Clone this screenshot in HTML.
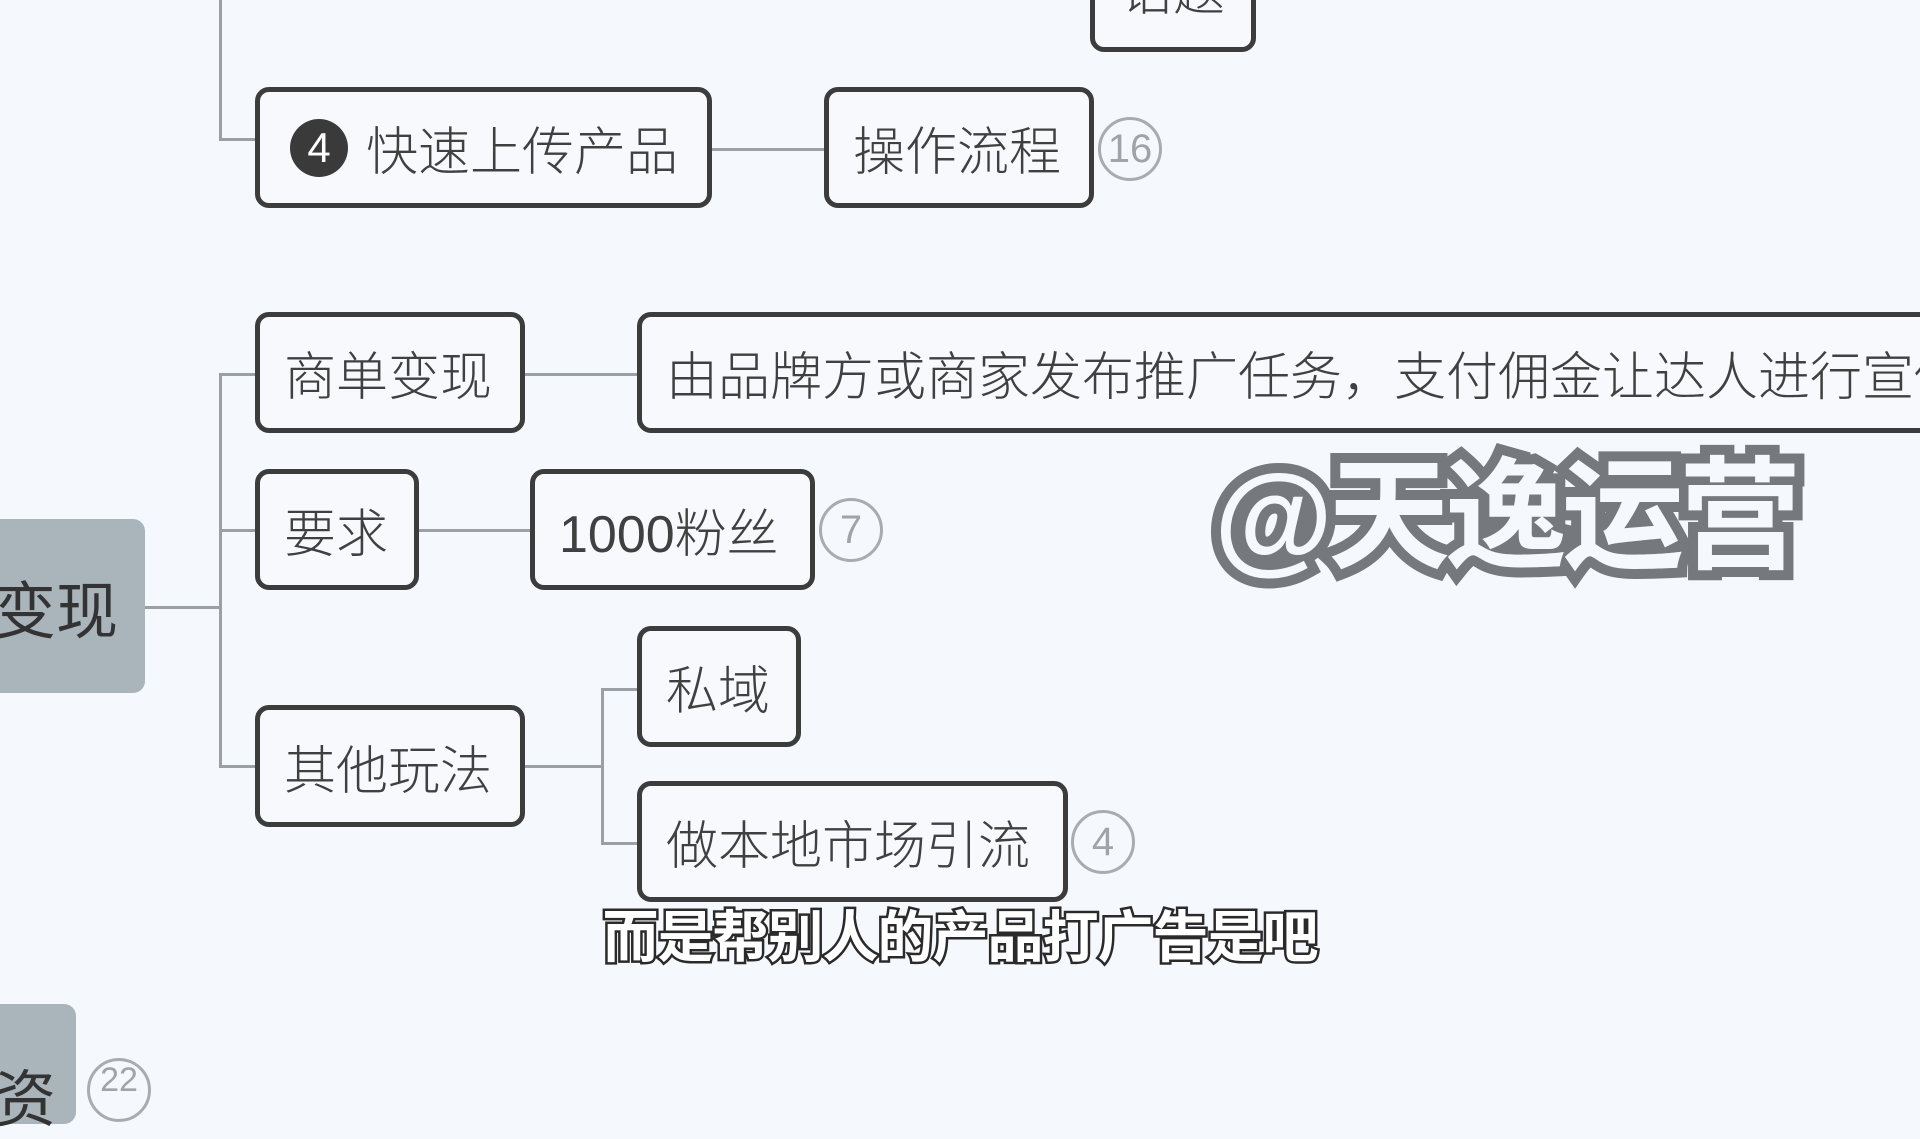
<!DOCTYPE html>
<html><head><meta charset="utf-8"><style>
html,body{margin:0;padding:0}
body{width:1920px;height:1080px;overflow:hidden;background:#f5f8fd;position:relative;font-family:"Liberation Sans","Noto Sans CJK SC",sans-serif}
.b{position:absolute;box-sizing:border-box;border:5px solid #3c3c3c;border-radius:14px;display:flex;align-items:center;padding-left:24px;font-size:52px;color:#404040;font-weight:300;white-space:nowrap;overflow:hidden;background:#f7f9fd}
.l{position:absolute;background:#9aa0a6}
.c{position:absolute;box-sizing:border-box;width:64px;height:64px;border:3px solid #a8acb0;border-radius:50%;color:#a0a4a8;font-size:40px;display:flex;align-items:center;justify-content:center}
.g{position:absolute;background:#aab4bb;border-radius:12px;color:#333;font-size:62px;display:flex;align-items:center}
</style></head><body>
<div class="l" style="left:219px;top:0;width:3px;height:140px"></div>
<div class="l" style="left:219px;top:138px;width:36px;height:3px"></div>
<div class="l" style="left:711px;top:148px;width:113px;height:3px"></div>
<div class="l" style="left:219px;top:373px;width:3px;height:394px"></div>
<div class="l" style="left:219px;top:373px;width:36px;height:3px"></div>
<div class="l" style="left:219px;top:529px;width:36px;height:3px"></div>
<div class="l" style="left:219px;top:765px;width:36px;height:3px"></div>
<div class="l" style="left:145px;top:606px;width:76px;height:3px"></div>
<div class="l" style="left:524px;top:373px;width:113px;height:3px"></div>
<div class="l" style="left:418px;top:529px;width:112px;height:3px"></div>
<div class="l" style="left:524px;top:765px;width:78px;height:3px"></div>
<div class="l" style="left:601px;top:688px;width:3px;height:156px"></div>
<div class="l" style="left:601px;top:688px;width:36px;height:3px"></div>
<div class="l" style="left:601px;top:842px;width:36px;height:3px"></div>

<div class="b" style="left:1090px;top:-60px;width:166px;height:112px;justify-content:center;padding:0;align-items:flex-end;padding-bottom:22px">话题</div>
<div class="b" style="left:255px;top:87px;width:457px;height:121px;padding-left:30px"><span style="display:inline-flex;width:58px;height:58px;border-radius:50%;background:#3a3a3a;color:#fff;font-size:42px;align-items:center;justify-content:center;margin-right:18px">4</span>快速上传产品</div>
<div class="b" style="left:824px;top:87px;width:270px;height:121px">操作流程</div>
<div class="c" style="left:1098px;top:117px">16</div>
<div class="b" style="left:255px;top:312px;width:270px;height:121px">商单变现</div>
<div class="b" style="left:637px;top:312px;width:1340px;height:121px">由品牌方或商家发布推广任务，支付佣金让达人进行宣传</div>
<div class="b" style="left:255px;top:469px;width:164px;height:121px">要求</div>
<div class="b" style="left:530px;top:469px;width:285px;height:121px">1000粉丝</div>
<div class="c" style="left:819px;top:498px">7</div>
<div class="g" style="left:-20px;top:519px;width:165px;height:174px"><span style="margin-left:14px">变现</span></div>
<div class="b" style="left:255px;top:705px;width:270px;height:122px">其他玩法</div>
<div class="b" style="left:637px;top:626px;width:164px;height:121px">私域</div>
<div class="b" style="left:637px;top:781px;width:431px;height:121px">做本地市场引流</div>
<div class="c" style="left:1071px;top:810px">4</div>
<div class="g" style="left:-20px;top:1004px;width:96px;height:120px"><span style="margin-left:14px;margin-top:60px">资</span></div>
<div class="c" style="left:87px;top:1058px;font-size:34px;align-items:flex-start">22</div>

<div style="position:absolute;left:1214px;top:418px;font-size:122px;font-weight:bold;color:#f5f8fd;white-space:nowrap;-webkit-text-stroke:20px #75787c;paint-order:stroke fill;letter-spacing:-5px">@天逸运营</div>
<div style="position:absolute;left:0;width:1920px;top:893px;text-align:center;font-size:56px;font-weight:bold;color:#fff;-webkit-text-stroke:5px #2a2a2a;paint-order:stroke fill;letter-spacing:-1px">而是帮别人的产品打广告是吧</div>
</body></html>
